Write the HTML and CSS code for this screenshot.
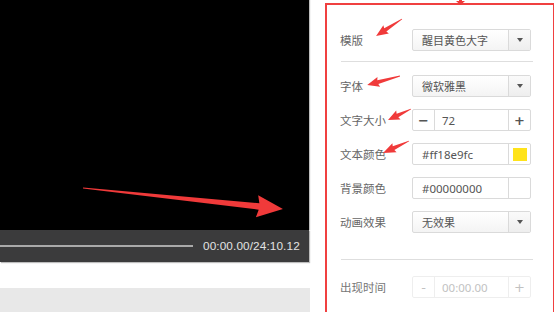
FILE: index.html
```html
<!DOCTYPE html>
<html>
<head>
<meta charset="utf-8">
<link rel="stylesheet" href="styles.css">
</head>
<body>
<div class="page">
  <div class="left">
    <div class="video"></div>
    <div class="bar">
      <div class="progress"></div>
      <span class="time">00:00.00/24:10.12</span>
    </div>
    <div class="band"></div>
  </div>
  <div class="right">
    <div class="panel">
      <div class="row first">
        <span class="label">模版</span>
        <div class="ctrl select"><span class="val">醒目黄色大字</span><span class="drop"><i class="tri"></i></span></div>
      </div>
      <div class="divider"></div>
      <div class="row">
        <span class="label">字体</span>
        <div class="ctrl select"><span class="val">微软雅黑</span><span class="drop"><i class="tri"></i></span></div>
      </div>
      <div class="row">
        <span class="label">文字大小</span>
        <div class="ctrl stepper"><span class="btn">−</span><span class="val num">72</span><span class="btn plus">+</span></div>
      </div>
      <div class="row">
        <span class="label">文本颜色</span>
        <div class="ctrl input"><span class="val num">#ff18e9fc</span><span class="swatch"><i class="chip yellow"></i></span></div>
      </div>
      <div class="row">
        <span class="label">背景颜色</span>
        <div class="ctrl input"><span class="val num">#00000000</span><span class="swatch"></span></div>
      </div>
      <div class="row">
        <span class="label">动画效果</span>
        <div class="ctrl select"><span class="val">无效果</span><span class="drop"><i class="tri"></i></span></div>
      </div>
      <div class="divider second"></div>
      <div class="row disabled">
        <span class="label">出现时间</span>
        <div class="ctrl stepper"><span class="btn">-</span><span class="val num">00:00.00</span><span class="btn plus">+</span></div>
      </div>
    </div>
  </div>
  <svg class="overlay" width="554" height="312" viewBox="0 0 554 312">
    <g fill="#f03a3a">
      <g transform="translate(83,188) rotate(6)">
        <polygon points="0,-0.6 177,-3.2 175,-11 201,0 175,11 177,3.2 0,0.6"/>
      </g>
      <g transform="translate(402,19) rotate(146.8)">
        <polygon points="0,-0.4 20,-2 19,-5 31,0 19,5 20,2 0,0.4"/>
      </g>
      <g transform="translate(400,76) rotate(164.7)">
        <polygon points="0,-0.4 23,-2 22,-5 34,0 22,5 23,2 0,0.4"/>
      </g>
      <g transform="translate(411,109) rotate(154.4)">
        <polygon points="0,-0.4 15,-2 14,-5 25.5,0 14,5 15,2 0,0.4"/>
      </g>
      <g transform="translate(409,141) rotate(155.2)">
        <polygon points="0,-0.4 17,-2 16,-5 28.6,0 16,5 17,2 0,0.4"/>
      </g>
      <polygon points="459,0 462,0 462,1 465,1 460.5,5 456,1 459,1"/>
    </g>
  </svg>
</div>
</body>
</html>
```

FILE: styles.css
```css
html, body {
  margin: 0;
  padding: 0;
  background: #ffffff;
}

.page {
  position: relative;
  width: 554px;
  height: 312px;
  overflow: hidden;
  display: flex;
  font-family: "Noto Sans CJK SC", "Noto Sans", sans-serif;
}

.left {
  width: 310px;
  flex: none;
  display: flex;
  flex-direction: column;
}

.video {
  width: 309px;
  height: 230px;
  background: #000000;
  box-shadow: 1px 0 1px #bdbdbd;
}

.bar {
  width: 309px;
  height: 32px;
  background: #3b3b3c;
  display: flex;
  align-items: center;
  gap: 10px;
  box-shadow: 1px 1px 1px #bdbdbd;
}

.progress {
  width: 193px;
  height: 2px;
  background: #a9a9a9;
}

.time {
  font-family: "Liberation Sans", Arial, sans-serif;
  font-size: 11.8px;
  color: #e2e2e2;
  letter-spacing: 0.1px;
}

.band {
  margin-top: 26px;
  width: 310px;
  flex: 1;
  background: #e8e8e8;
}

.right {
  flex: 1;
  padding: 3px 0 0 15px;
}

.panel {
  width: 213px;
  height: 320px;
  border: 2px solid #f04040;
  border-bottom: none;
  padding: 24px 0 0 13px;
}

.row {
  display: flex;
  align-items: center;
  height: 22px;
  margin-top: 12px;
}

.row.first {
  margin-top: 0;
}

.label {
  width: 72px;
  flex: none;
  font-size: 11.5px;
  color: #666666;
}

.ctrl {
  width: 119px;
  height: 22px;
  box-sizing: border-box;
  border: 1px solid #dadada;
  border-radius: 2px;
  display: flex;
  align-items: stretch;
  background: #ffffff;
}

.select {
  background: linear-gradient(#ffffff, #f4f4f4);
}

.val {
  flex: 1;
  display: flex;
  align-items: center;
  padding-left: 9px;
  font-size: 11px;
  color: #555555;
}

.val.num {
  font-family: "Noto Sans", "Noto Sans CJK SC", sans-serif;
  font-size: 11.5px;
}

.drop {
  width: 21px;
  border-left: 1px solid #dadada;
  display: flex;
  align-items: center;
  justify-content: center;
  background: linear-gradient(#fafafa, #eeeeee);
}

.tri {
  width: 0;
  height: 0;
  border-left: 3.5px solid transparent;
  border-right: 3.5px solid transparent;
  border-top: 4px solid #555555;
}

.stepper .val {
  padding-left: 7px;
}

.btn {
  width: 21px;
  flex: none;
  display: flex;
  align-items: center;
  justify-content: center;
  font-family: "DejaVu Sans", sans-serif;
  font-size: 13px;
  font-weight: bold;
  color: #555555;
  border-right: 1px solid #dadada;
}

.btn.plus {
  border-right: none;
  border-left: 1px solid #dadada;
}

.swatch {
  width: 21px;
  flex: none;
  border-left: 1px solid #dadada;
  display: flex;
  align-items: center;
  justify-content: center;
}

.chip {
  width: 14px;
  height: 13px;
}

.yellow {
  background: #ffe31a;
}

.divider {
  width: 192px;
  height: 1px;
  margin: 10px 0 1px 1px;
  background: #dedede;
}

.divider + .row {
  margin-top: 13px;
}

.divider.second {
  margin-top: 26px;
}

.divider.second + .row {
  margin-top: 16px;
}

.disabled .label {
  color: #777777;
}

.disabled .ctrl {
  opacity: 0.6;
  border-color: #e4e4e4;
}

.disabled .btn {
  font-weight: normal;
  color: #999999;
  border-color: #e4e4e4;
}

.disabled .val {
  color: #999999;
}

.overlay {
  position: absolute;
  left: 0;
  top: 0;
  pointer-events: none;
}
```
